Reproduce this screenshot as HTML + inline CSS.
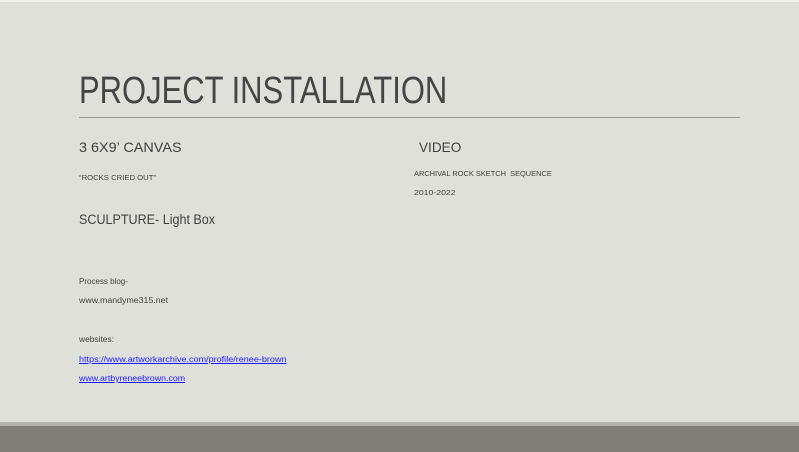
<!DOCTYPE html>
<html><head><style>
body{margin:0;width:799px;height:452px;overflow:hidden;background:#e0e0db;font-family:"Liberation Sans",sans-serif;position:relative}
.t{position:absolute;white-space:nowrap;transform-origin:0 0;color:#404040}
a{color:#1a1aff;text-decoration:underline}
</style></head><body>
<div style="position:absolute;left:0;top:0;width:799px;height:2px;background:#f0f0ec"></div>
<div class="t" style="left:79px;top:70px;font-size:38px;transform:scaleX(0.815);color:#454545">PROJECT INSTALLATION</div>
<div style="position:absolute;left:79px;top:117px;width:661px;height:1px;background:#9a9a95"></div>
<div class="t" style="left:79px;top:139px;font-size:14px;transform:scaleX(1.03)">3 6X9’ CANVAS</div>
<div class="t" style="left:419px;top:139px;font-size:14px;transform:scaleX(0.97)">VIDEO</div>
<div class="t" style="left:79px;top:175px;font-size:7px;transform:scaleX(1.1)">“ROCKS CRIED OUT”</div>
<div class="t" style="left:414px;top:169px;font-size:7.5px;transform:scaleX(0.99)">ARCHIVAL ROCK SKETCH &nbsp;SEQUENCE</div>
<div class="t" style="left:414px;top:188px;font-size:7.5px;transform:scaleX(1.16)">2010-2022</div>
<div class="t" style="left:79px;top:212px;font-size:13.5px;transform:scaleX(0.93)">SCULPTURE- Light Box</div>
<div class="t" style="left:79px;top:277px;font-size:8px;transform:scaleX(1.0)">Process blog-</div>
<div class="t" style="left:79px;top:296px;font-size:8px;transform:scaleX(1.1)">www.mandyme315.net</div>
<div class="t" style="left:79px;top:335px;font-size:8px;transform:scaleX(1.05)">websites:</div>
<div class="t" style="left:79px;top:355px;font-size:8px;transform:scaleX(1.13)"><a>https://www.artworkarchive.com/profile/renee-brown</a></div>
<div class="t" style="left:79px;top:374px;font-size:8px;transform:scaleX(1.1)"><a>www.artbyreneebrown.com</a></div>
<div style="position:absolute;left:0;top:422px;width:799px;height:4px;background:#b4b4ae"></div>
<div style="position:absolute;left:0;top:426px;width:799px;height:26px;background:#7f7f77"></div>
</body></html>
